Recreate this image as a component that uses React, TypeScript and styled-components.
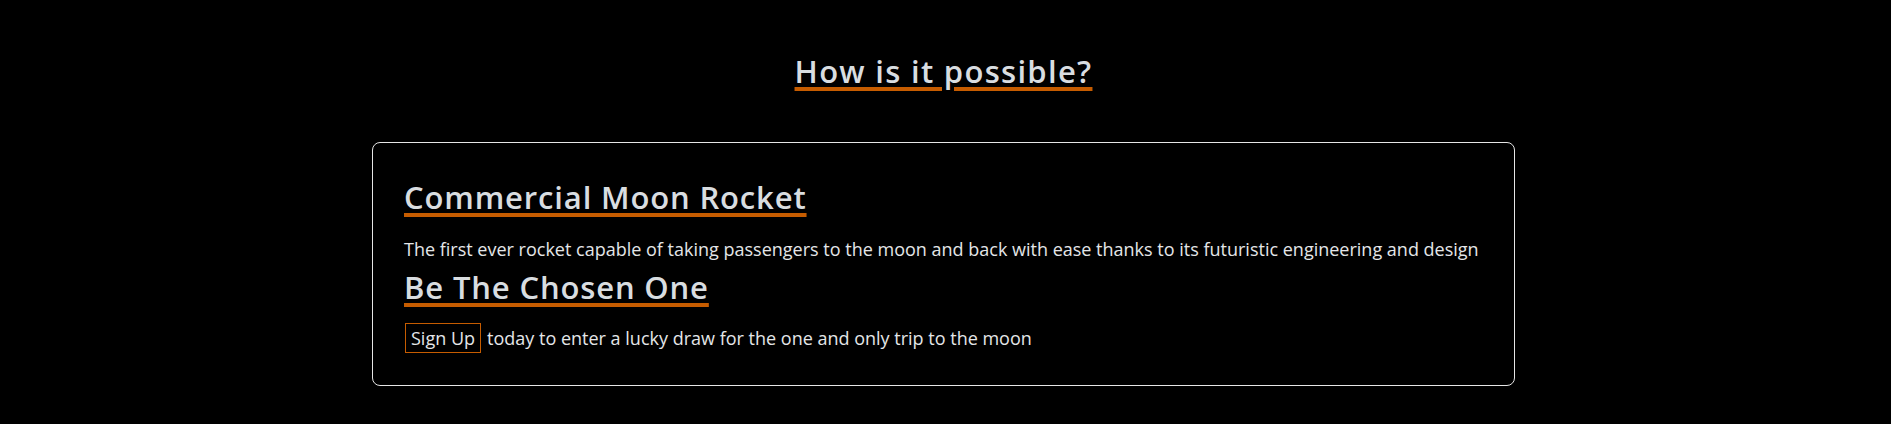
import React from "react";
import styled, { createGlobalStyle } from "styled-components";

const Global = createGlobalStyle`
  html, body { margin: 0; padding: 0; background: #000; }
  body { font-family: "Open Sans", "Noto Sans", sans-serif; color: #dde1e4; }
`;

const Page = styled.main`
  display: flex;
  flex-direction: column;
  align-items: center;
  padding: 51px 4px 38px 0;
`;

const Title = styled.h1`
  margin: 0 0 51px;
  font-size: 31px;
  line-height: 40px;
  font-weight: 600;
  letter-spacing: 1.3px;
  color: #d9dde0;
  text-decoration: underline;
  text-decoration-color: #c65c00;
  text-decoration-thickness: 4px;
  text-underline-offset: 4px;
`;

const Card = styled.section`
  box-sizing: border-box;
  width: 1143px;
  border: 1px solid #e6e6e6;
  border-radius: 8px;
  padding: 34px 31px 32px;
  display: flex;
  flex-direction: column;
  align-items: flex-start;
`;

const Heading = styled.h2<{ $gap: number }>`
  margin: 0 0 ${(p) => p.$gap}px;
  font-size: 31px;
  line-height: 40px;
  font-weight: 600;
  letter-spacing: 0.85px;
  color: #d9dde0;
  text-decoration: underline;
  text-decoration-color: #c65c00;
  text-decoration-thickness: 4px;
  text-underline-offset: 4px;
`;

const Text = styled.p<{ $gap: number }>`
  margin: 0 0 ${(p) => p.$gap}px;
  font-size: 18px;
  line-height: 24px;
  font-weight: 400;
  color: #e4e6e8;
  display: flex;
  align-items: center;
  gap: 6px;
`;

const SignUp = styled.a`
  display: inline-block;
  box-sizing: border-box;
  height: 30px;
  line-height: 28px;
  padding: 0 5px;
  margin-left: 1px;
  border: 1px solid #c65c00;
  color: #e4e6e8;
  text-decoration: none;
`;

export default function App() {
  return (
    <>
      <Global />
      <Page>
        <Title>How is it possible?</Title>
        <Card>
          <Heading $gap={20}>Commercial Moon Rocket</Heading>
          <Text $gap={6}>
            The first ever rocket capable of taking passengers to the moon and back with ease thanks to its futuristic engineering and design
          </Text>
          <Heading $gap={16}>Be The Chosen One</Heading>
          <Text $gap={0}>
            <SignUp href="#">Sign Up</SignUp>
            today to enter a lucky draw for the one and only trip to the moon
          </Text>
        </Card>
      </Page>
    </>
  );
}
